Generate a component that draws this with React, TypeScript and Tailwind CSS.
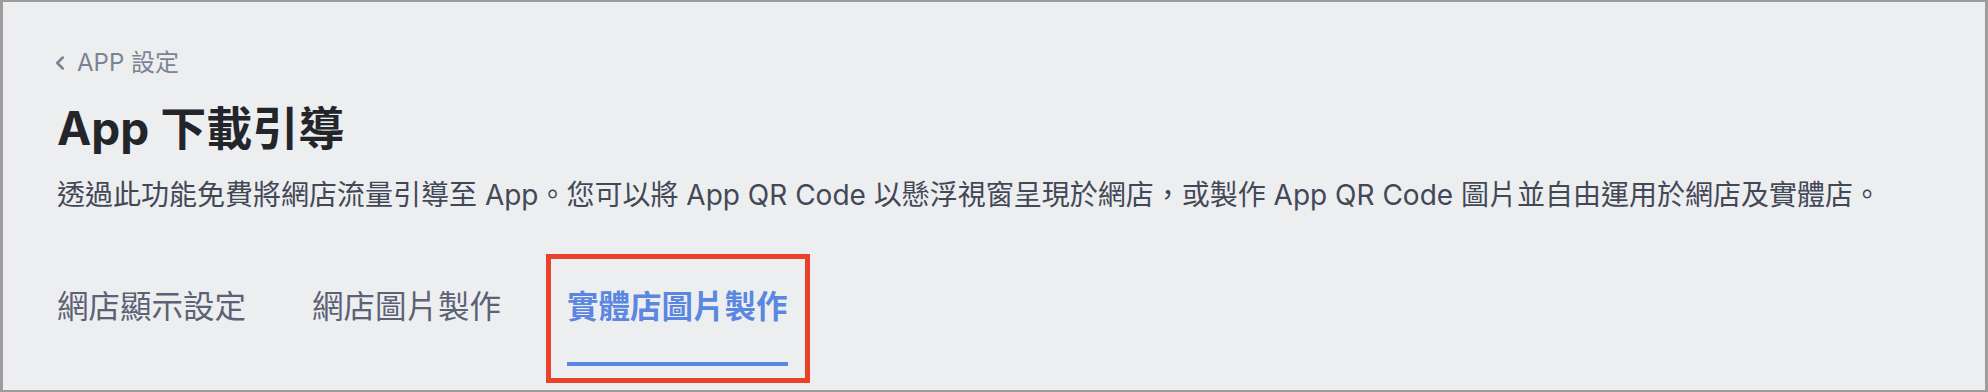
import { ChevronLeft } from "lucide-react";

const tabs = ["網店顯示設定", "網店圖片製作", "實體店圖片製作"];

export default function App() {
  const active = 2;

  return (
    <div
      className="box-border h-[392px] w-[1988px] overflow-hidden border-x-[3px] border-t-2 border-b-2 border-[#9d9d9d] bg-[#edeef0] pl-[54px]"
      style={{ fontFamily: 'Inter, "Noto Sans CJK TC", sans-serif' }}
    >
      {/* breadcrumb */}
      <div className="mt-[46px] flex h-[30px] items-center gap-[6px] text-[24px] text-[#7b8395]">
        <ChevronLeft size={22} strokeWidth={2.8} className="-ml-[8px]" />
        <span>APP 設定</span>
      </div>

      <h1 className="mt-[22px] h-[56px] text-[46px] font-bold leading-[56px] text-[#23252b]">
        App 下載引導
      </h1>

      <p className="mt-[21px] h-[36px] text-[28px] leading-[36px] text-[#434856]">
        透過此功能免費將網店流量引導至 App。您可以將 App QR Code 以懸浮視窗呈現於網店，或製作 App QR Code 圖片並自由運用於網店及實體店。
      </p>

      <nav className="mt-[74px] flex gap-[66px]">
        {tabs.map((t, i) => {
          const on = i === active;
          return (
            <div key={t} className="relative flex flex-col">
              <span
                className={
                  "h-[40px] text-[31.5px] leading-[40px] " +
                  (on ? "font-bold text-[#5b87e0]" : "text-[#5b6275]")
                }
              >
                {t}
              </span>
              <div
                className={
                  "mt-[35px] h-[4px] w-full " + (on ? "bg-[#5b87e0]" : "bg-transparent")
                }
              />
              {on && (
                <div className="pointer-events-none absolute -top-[33px] -right-[22px] -bottom-[17px] -left-[21px] border-[5px] border-[#e8432a]" />
              )}
            </div>
          );
        })}
      </nav>
    </div>
  );
}
